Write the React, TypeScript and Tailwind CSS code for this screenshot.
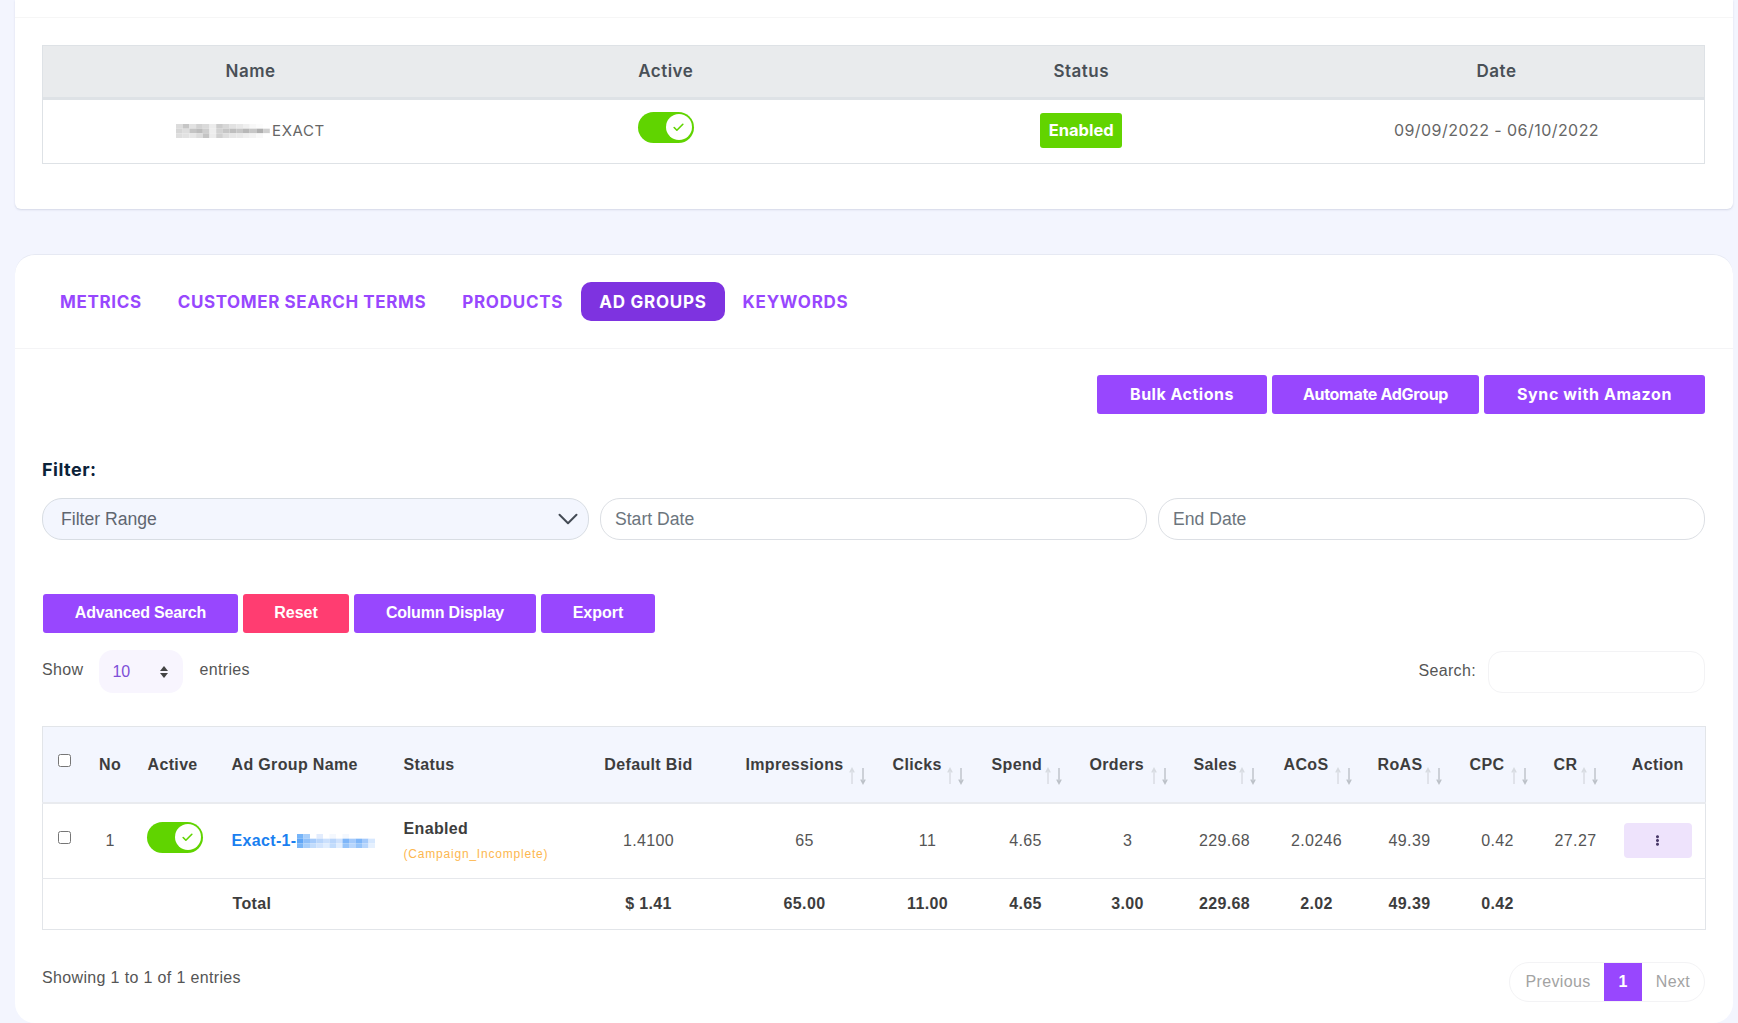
import { Check, ChevronDown } from 'lucide-react';
import { FaEllipsisV } from 'react-icons/fa';

const greyPixels = [
  ['#dcdcdc', '#c6c6c6', '#e2e2e2', '#d2d2d2', '#dadada', '#ececec', '#cccccc', '#d8d8d8', '#e2e2e2', '#e8e8e8', '#f0f0f0', '#f8f8f8', '#fcfcfc', '#ffffff'],
  ['#d6d6d6', '#dedede', '#c4c4c4', '#bcbcbc', '#cecece', '#eeeeee', '#d2d2d2', '#c6c6c6', '#bebebe', '#c6c6c6', '#b8b8b8', '#c6c6c6', '#b0b0b0', '#cfcfcf'],
  ['#dedede', '#e2e2e2', '#e6e6e6', '#dcdcdc', '#c4c4c4', '#ececec', '#d0d0d0', '#dedede', '#e6e6e6', '#e8e8e8', '#eeeeee', '#f2f2f2', '#f8f8f8', '#ffffff'],
];

const bluePixels = [
  ['#76b4f8', '#a8cffb', '#ffffff', '#e2ecfd', '#ffffff', '#f4f8fe', '#ffffff', '#f4f8fe', '#ffffff', '#ffffff', '#ffffff', '#ffffff'],
  ['#5fa6f7', '#8fc0fa', '#a6cbfb', '#bad6fb', '#cbe0fd', '#bad6fb', '#cfe2fd', '#7eb6f9', '#a4cafb', '#7eb6f9', '#a4cafb', '#d7e8fe'],
  ['#7ab6f8', '#a8cffb', '#c2dcfc', '#d2e4fd', '#e0edfe', '#c2dcfc', '#e0edfe', '#96c4fa', '#b8d6fc', '#96c4fa', '#b8d6fc', '#e5f0fe'],
];

const Pixelated = ({ rows, size }: { rows: string[][]; size: number }) => (
  <svg
    width={rows[0].length * size}
    height={rows.length * (14 / 3)}
    viewBox={`0 0 ${rows[0].length} ${rows.length}`}
    preserveAspectRatio="none"
    className="inline-block align-middle blur-[0.4px]"
  >
    {rows.map((row, y) =>
      row.map((fill, x) => <rect key={`${x}-${y}`} x={x} y={y} width="1" height="1" fill={fill} />),
    )}
  </svg>
);

const Toggle = () => (
  <div className="flex h-[31px] w-[56px] items-center justify-end rounded-full bg-[#60d400] pr-[2px]">
    <div className="flex h-[26px] w-[26px] items-center justify-center rounded-full bg-white">
      <Check size={13} strokeWidth={3} className="text-[#60d400]" />
    </div>
  </div>
);

const SortArrows = () => (
  <svg width="18" height="18" viewBox="0 0 18 18" fill="none" className="absolute right-3 top-[40px]">
    <path d="M3 17V2M0.8 5.5L3 1.5L5.2 5.5" stroke="#d7dbe1" strokeWidth="1.4" />
    <path d="M14 1V16M11.8 12.5L14 16.5L16.2 12.5" stroke="#bcc1c8" strokeWidth="1.4" />
  </svg>
);

const columnWidths = [
  'w-[46px]',
  'w-[44px]',
  'w-[83px]',
  'w-[173px]',
  'w-[178px]',
  'w-[164px]',
  'w-[148px]',
  'w-[98px]',
  'w-[98px]',
  'w-[106px]',
  'w-[88px]',
  'w-[96px]',
  'w-[90px]',
  'w-[86px]',
  'w-[70px]',
  'w-[95px]',
];

const sortable = [
  { name: 'Impressions', pad: 'pl-[15px]' },
  { name: 'Clicks', pad: 'pl-[14px]' },
  { name: 'Spend', pad: 'pl-[15px]' },
  { name: 'Orders', pad: 'pl-[15px]' },
  { name: 'Sales', pad: 'pl-[13px]' },
  { name: 'ACoS', pad: 'pl-[15px]' },
  { name: 'RoAS', pad: 'pl-[13px]' },
  { name: 'CPC', pad: 'pl-[15px]' },
  { name: 'CR', pad: 'pl-[13px]' },
];
const rowValues = ['65', '11', '4.65', '3', '229.68', '2.0246', '49.39', '0.42', '27.27'];
const totalValues = ['65.00', '11.00', '4.65', '3.00', '229.68', '2.02', '49.39', '0.42', ''];

const Button = ({ label, className }: { label: string; className: string }) => (
  <button className={`h-[39px] rounded-[3px] pb-[2px] font-bold text-white ${className}`}>{label}</button>
);

const tabClass = 'flex h-[39px] items-center px-[18px] pt-[2px]';

export default function App() {
  return (
    <div className="h-[1023px] overflow-hidden bg-[#f3f5fe] pl-[15px] pr-[5px] font-['Liberation_Sans',sans-serif] text-[#555] tracking-[0.35px]">
      {/* summary card */}
      <div className="h-[209px] rounded-b-[6px] bg-white shadow-[0_1px_2px_rgba(190,195,215,0.6)] font-['Inter',sans-serif] tracking-normal">
        <div className="h-[18px] border-b border-[#f6f6f6]" />
        <div className="pl-[27px] pr-[28px] pt-[27px]">
          <table className="w-full table-fixed border-collapse border border-[#dee2e6] text-center">
            <thead>
              <tr className="h-[53px] border-b-[3px] border-[#dee2e6] bg-[#e9ebed] text-[17px] tracking-[0.5px] text-[#495057]">
                <th className="font-semibold">Name</th>
                <th className="font-semibold">Active</th>
                <th className="font-semibold">Status</th>
                <th className="font-semibold">Date</th>
              </tr>
            </thead>
            <tbody>
              <tr className="h-[65px] text-[15px] text-[#666]">
                <td>
                  <span className="inline-flex translate-y-px items-center justify-center gap-[2px]">
                    <Pixelated rows={greyPixels} size={6.7} />
                    <span className="tracking-[0.6px]">EXACT</span>
                  </span>
                </td>
                <td>
                  <div className="mb-[9px] flex justify-center">
                    <Toggle />
                  </div>
                </td>
                <td className="pb-[2px]">
                  <span className="inline-flex h-[35px] w-[82px] items-center justify-center rounded-[3px] bg-[#62d400] text-[16.5px] font-bold text-white">
                    Enabled
                  </span>
                </td>
                <td className="pb-[4px] text-[16px] tracking-[0.45px]">09/09/2022 - 06/10/2022</td>
              </tr>
            </tbody>
          </table>
        </div>
      </div>

      {/* ad groups card */}
      <div className="mt-[45px] h-[769px] rounded-[20px] border-t border-[#e6e9f3] bg-white">
        <div className="flex border-b border-[#f4f4f6] pb-[27px] pl-[27px] pt-[27px] font-['Inter',sans-serif] text-[17px] font-bold tracking-[0.75px] text-[#9847fe]">
          <a className={`${tabClass} tracking-[0.65px]`}>METRICS</a>
          <a className={`${tabClass} tracking-[0.6px]`}>CUSTOMER SEARCH TERMS</a>
          <a className={tabClass}>PRODUCTS</a>
          <a className={`${tabClass} rounded-[10px] bg-[#7e33e0] text-white`}>AD GROUPS</a>
          <a className={tabClass}>KEYWORDS</a>
        </div>

        <div className="pl-[27px] pr-[28px]">
          <div className="flex justify-end gap-[5px] pt-[26px] font-['Inter',sans-serif] text-[16px]">
            <Button label="Bulk Actions" className="w-[170px] bg-[#9847fe] tracking-[0.5px]" />
            <Button label="Automate AdGroup" className="w-[207px] bg-[#9847fe] tracking-[-0.3px]" />
            <Button label="Sync with Amazon" className="w-[221px] bg-[#9847fe] tracking-[0.6px]" />
          </div>

          <div className="mt-[44px] h-[24px] font-['Inter',sans-serif] text-[18px] font-bold leading-[24px] tracking-[0.5px] text-[#0b2239]">
            Filter:
          </div>

          <div className="mt-[16px] grid grid-cols-3 gap-[11px] text-[17.6px] tracking-normal">
            <div className="flex h-[42px] items-center justify-between rounded-[20px] border border-[#d8dde3] bg-[#f3f6fe] pl-[18px] pr-[3px] text-[#5f6670]">
              <span>Filter Range</span>
              <ChevronDown size={34} strokeWidth={1.4} className="text-[#444b55]" />
            </div>
            <input placeholder="Start Date" className="h-[42px] rounded-[20px] border border-[#dcdfe4] px-[14px] outline-none placeholder:text-[#6c757d]" />
            <input placeholder="End Date" className="h-[42px] rounded-[20px] border border-[#dcdfe4] px-[14px] outline-none placeholder:text-[#6c757d]" />
          </div>

          <div className="mt-[54px] flex gap-[5px] pl-px text-[16px] tracking-[-0.2px]">
            <Button label="Advanced Search" className="w-[195px] bg-[#9847fe]" />
            <Button label="Reset" className="w-[106px] bg-[#ff3d71] tracking-normal" />
            <Button label="Column Display" className="w-[182px] bg-[#9847fe]" />
            <Button label="Export" className="w-[114px] bg-[#9847fe] tracking-normal" />
          </div>

          <div className="mt-[17px] flex h-[43px] items-center justify-between text-[16px]">
            <div className="flex items-center">
              <span className="mb-[3px]">Show</span>
              <div className="ml-[16px] flex h-[43px] w-[84px] items-center justify-between rounded-[14px] bg-[#f8f5fe] pl-[13px] pr-[14px] text-[#7e4fd8]">
                <span className="tracking-normal">10</span>
                <svg width="10" height="14" viewBox="0 0 10 14" className="fill-[#444]">
                  <path d="M5 1L9 6H1Z" />
                  <path d="M5 13L1 8H9Z" />
                </svg>
              </div>
              <span className="mb-[3px] ml-[16px]">entries</span>
            </div>
            <div className="flex items-center">
              <span className="mb-px mr-[12px]">Search:</span>
              <input className="h-[42px] w-[217px] rounded-[14px] border border-[#f3f3f5] outline-none" />
            </div>
          </div>

          <table className="mt-[33px] w-[1664px] table-fixed border-collapse border border-[#e2e5e9] text-center text-[16px]">
            <colgroup>
              {columnWidths.map((w, i) => (
                <col key={i} className={w} />
              ))}
            </colgroup>
            <thead>
              <tr className="h-[76px] border-b-2 border-[#e9ebef] bg-[#f3f6fe] font-bold text-[#3d3d3d]">
                <th className="pb-[10px] pr-[2px] font-normal"><input type="checkbox" className="align-middle" /></th>
                <th className="pr-px pt-[2px]">No</th>
                <th className="pl-[15px] pt-[2px] text-left">Active</th>
                <th className="whitespace-nowrap pl-4 pt-[2px] text-left">Ad Group Name</th>
                <th className="pl-[15px] pt-[2px] text-left">Status</th>
                <th className="pt-[2px]">Default Bid</th>
                {sortable.map((col) => (
                  <th key={col.name} className={`relative pt-[2px] text-left ${col.pad}`}>
                    {col.name}
                    <SortArrows />
                  </th>
                ))}
                <th className="pt-[2px]">Action</th>
              </tr>
            </thead>
            <tbody>
              <tr className="h-[76px] border-b border-[#e6e8ec]">
                <td className="pb-[9px] pr-[2px]"><input type="checkbox" className="align-middle" /></td>
                <td className="pr-px">1</td>
                <td className="pl-[14px]">
                  <div className="mb-[7px]"><Toggle /></div>
                </td>
                <td className="whitespace-nowrap pl-4 text-left font-bold text-[#1a7ff0]">
                  <span className="inline-flex items-center">
                    Exact-1-
                    <Pixelated rows={bluePixels} size={6.5} />
                  </span>
                </td>
                <td className="pb-[1px] pl-[15px] text-left">
                  <div className="font-bold leading-[22px] text-[#3d3d3d]">Enabled</div>
                  <div className="mt-[6px] whitespace-nowrap text-[12px] leading-[16px] tracking-[0.8px] text-[#fdb74f]">
                    (Campaign_Incomplete)
                  </div>
                </td>
                <td>1.4100</td>
                {rowValues.map((v, i) => (
                  <td key={i}>{v}</td>
                ))}
                <td>
                  <button className="flex h-[35px] w-[68px] translate-x-[13px] items-center justify-center rounded-[4px] bg-[#eee3fc] text-[#4a3a6a]">
                    <FaEllipsisV size={11} />
                  </button>
                </td>
              </tr>
              <tr className="h-[51px] font-bold text-[#3d3d3d]">
                <td />
                <td />
                <td />
                <td className="pl-[17px] text-left">Total</td>
                <td />
                <td>$ 1.41</td>
                {totalValues.map((v, i) => (
                  <td key={i}>{v}</td>
                ))}
                <td />
              </tr>
            </tbody>
          </table>

          <div className="mt-[32px] flex h-[40px] items-center justify-between text-[16px]">
            <span className="mb-[8px]">Showing 1 to 1 of 1 entries</span>
            <div className="flex h-[40px] items-center overflow-hidden rounded-full border border-[#f3f3f5] text-[#a3a3a3]">
              <span className="flex h-full w-[94px] items-center justify-center pl-[2px]">Previous</span>
              <span className="flex h-full w-[38px] items-center justify-center bg-[#9847fe] font-bold text-white">1</span>
              <span className="flex h-full w-[62px] items-center justify-center">Next</span>
            </div>
          </div>
        </div>
      </div>
    </div>
  );
}
